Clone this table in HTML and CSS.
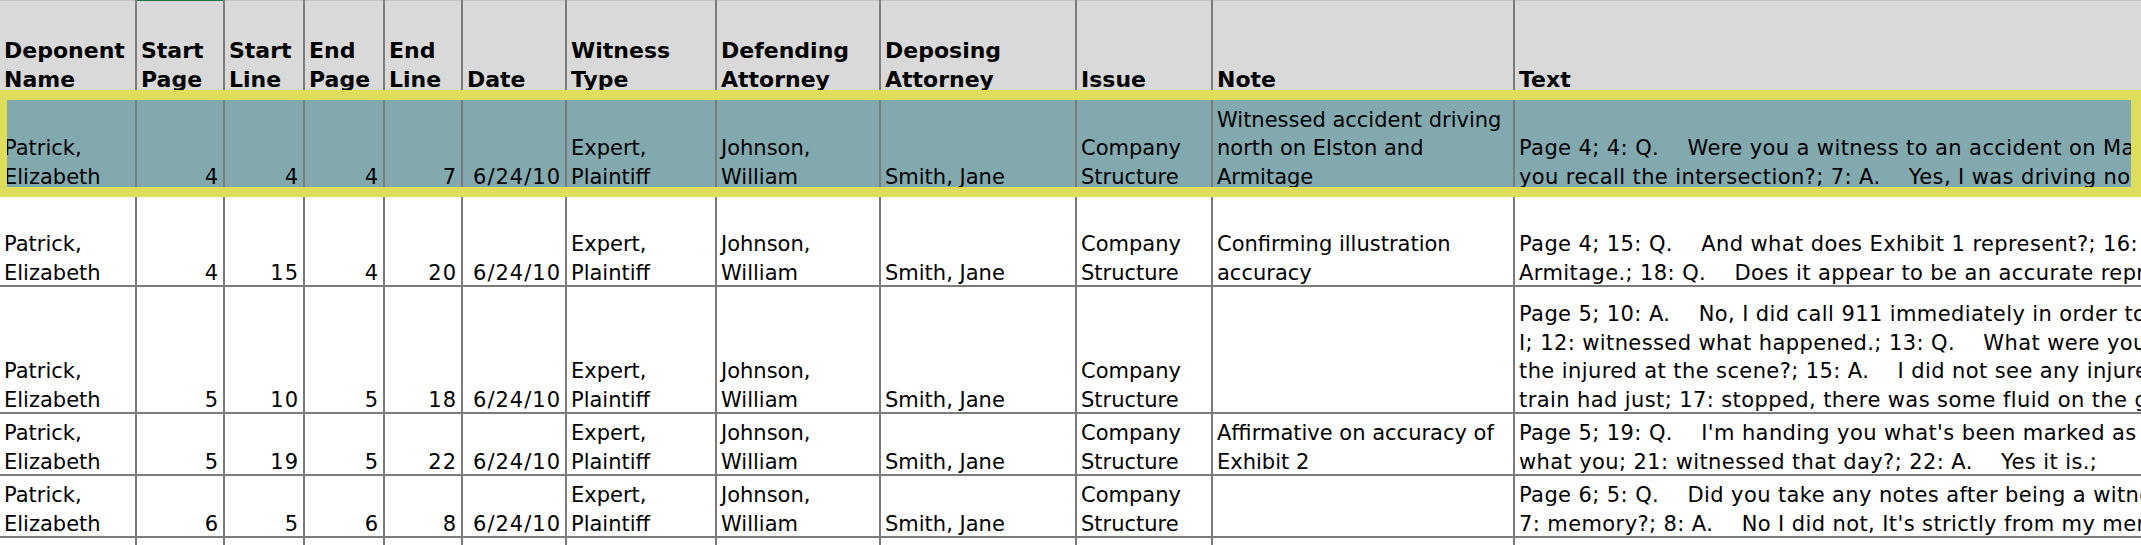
FILE: index.html
```html
<!DOCTYPE html>
<html lang="en">
<head>
<meta charset="utf-8">
<title>Deposition Designations</title>
<link rel="stylesheet" href="styles.css">
</head>
<body>
<div class="page">
  <div class="sheet">
    <div class="c hd"><span class="t">Deponent<br>Name</span></div>
    <div class="c hd sel"><span class="t">Start<br>Page</span></div>
    <div class="c hd"><span class="t">Start<br>Line</span></div>
    <div class="c hd"><span class="t">End<br>Page</span></div>
    <div class="c hd"><span class="t">End<br>Line</span></div>
    <div class="c hd"><span class="t">Date</span></div>
    <div class="c hd"><span class="t">Witness<br>Type</span></div>
    <div class="c hd"><span class="t">Defending<br>Attorney</span></div>
    <div class="c hd"><span class="t">Deposing<br>Attorney</span></div>
    <div class="c hd"><span class="t">Issue</span></div>
    <div class="c hd"><span class="t">Note</span></div>
    <div class="c hd"><span class="t">Text</span></div>

    <div class="c hl"><span class="t">Patrick,<br>Elizabeth</span></div>
    <div class="c hl n"><span class="t">4</span></div>
    <div class="c hl n"><span class="t">4</span></div>
    <div class="c hl n"><span class="t">4</span></div>
    <div class="c hl n"><span class="t">7</span></div>
    <div class="c hl n"><span class="t">6/24/10</span></div>
    <div class="c hl"><span class="t">Expert,<br>Plaintiff</span></div>
    <div class="c hl"><span class="t">Johnson,<br>William</span></div>
    <div class="c hl"><span class="t">Smith, Jane</span></div>
    <div class="c hl"><span class="t">Company<br>Structure</span></div>
    <div class="c hl"><span class="t">Witnessed accident driving<br>north on Elston and<br>Armitage</span></div>
    <div class="c hl tx"><span class="t">Page 4; 4: Q.    Were you a witness to an accident on March<br>you recall the intersection?; 7: A.    Yes, I was driving north</span></div>

    <div class="c"><span class="t">Patrick,<br>Elizabeth</span></div>
    <div class="c n"><span class="t">4</span></div>
    <div class="c n"><span class="t">15</span></div>
    <div class="c n"><span class="t">4</span></div>
    <div class="c n"><span class="t">20</span></div>
    <div class="c n"><span class="t">6/24/10</span></div>
    <div class="c"><span class="t">Expert,<br>Plaintiff</span></div>
    <div class="c"><span class="t">Johnson,<br>William</span></div>
    <div class="c"><span class="t">Smith, Jane</span></div>
    <div class="c"><span class="t">Company<br>Structure</span></div>
    <div class="c"><span class="t">Confirming illustration<br>accuracy</span></div>
    <div class="c tx"><span class="t">Page 4; 15: Q.    And what does Exhibit 1 represent?; 16: A.<br>Armitage.; 18: Q.    Does it appear to be an accurate representation</span></div>

    <div class="c"><span class="t">Patrick,<br>Elizabeth</span></div>
    <div class="c n"><span class="t">5</span></div>
    <div class="c n"><span class="t">10</span></div>
    <div class="c n"><span class="t">5</span></div>
    <div class="c n"><span class="t">18</span></div>
    <div class="c n"><span class="t">6/24/10</span></div>
    <div class="c"><span class="t">Expert,<br>Plaintiff</span></div>
    <div class="c"><span class="t">Johnson,<br>William</span></div>
    <div class="c"><span class="t">Smith, Jane</span></div>
    <div class="c"><span class="t">Company<br>Structure</span></div>
    <div class="c"><span class="t"></span></div>
    <div class="c tx"><span class="t">Page 5; 10: A.    No, I did call 911 immediately in order to<br>I; 12: witnessed what happened.; 13: Q.    What were your<br>the injured at the scene?; 15: A.    I did not see any injured<br>train had just; 17: stopped, there was some fluid on the ground</span></div>

    <div class="c"><span class="t">Patrick,<br>Elizabeth</span></div>
    <div class="c n"><span class="t">5</span></div>
    <div class="c n"><span class="t">19</span></div>
    <div class="c n"><span class="t">5</span></div>
    <div class="c n"><span class="t">22</span></div>
    <div class="c n"><span class="t">6/24/10</span></div>
    <div class="c"><span class="t">Expert,<br>Plaintiff</span></div>
    <div class="c"><span class="t">Johnson,<br>William</span></div>
    <div class="c"><span class="t">Smith, Jane</span></div>
    <div class="c"><span class="t">Company<br>Structure</span></div>
    <div class="c"><span class="t">Affirmative on accuracy of<br>Exhibit 2</span></div>
    <div class="c tx"><span class="t">Page 5; 19: Q.    I'm handing you what's been marked as Exhibit<br>what you; 21: witnessed that day?; 22: A.    Yes it is.;</span></div>

    <div class="c"><span class="t">Patrick,<br>Elizabeth</span></div>
    <div class="c n"><span class="t">6</span></div>
    <div class="c n"><span class="t">5</span></div>
    <div class="c n"><span class="t">6</span></div>
    <div class="c n"><span class="t">8</span></div>
    <div class="c n"><span class="t">6/24/10</span></div>
    <div class="c"><span class="t">Expert,<br>Plaintiff</span></div>
    <div class="c"><span class="t">Johnson,<br>William</span></div>
    <div class="c"><span class="t">Smith, Jane</span></div>
    <div class="c"><span class="t">Company<br>Structure</span></div>
    <div class="c"><span class="t"></span></div>
    <div class="c tx"><span class="t">Page 6; 5: Q.    Did you take any notes after being a witness<br>7: memory?; 8: A.    No I did not, It's strictly from my memory</span></div>

    <div class="c"></div><div class="c"></div><div class="c"></div><div class="c"></div>
    <div class="c"></div><div class="c"></div><div class="c"></div><div class="c"></div>
    <div class="c"></div><div class="c"></div><div class="c"></div><div class="c"></div>
  </div>
  <div class="selection"></div>
</div>
</body>
</html>
```

FILE: styles.css
```css
html, body {
  margin: 0;
  padding: 0;
  background: #ffffff;
  overflow: hidden;
}

.page {
  position: relative;
  width: 2141px;
  height: 545px;
  overflow: hidden;
  font-family: "DejaVu Sans", "Verdana", sans-serif;
  font-size: 21px;
  color: #000000;
}

.sheet {
  display: grid;
  grid-template-columns: 135px 86px 78px 78px 76px 102px 148px 162px 194px 134px 300px 900px;
  grid-template-rows: 92px 95px 94px 125px 60px 60px 60px;
  gap: 2px;
  background: #7b7b7b;
  width: max-content;
}

.c {
  background: #ffffff;
  display: flex;
  flex-direction: column;
  justify-content: flex-end;
  align-items: flex-start;
  padding: 0 4px 0 4px;
  overflow: hidden;
  min-width: 0;
}

.t {
  display: block;
  white-space: pre;
  line-height: 28.5px;
  margin-bottom: -2px;
}

.n {
  align-items: flex-end;
  padding-right: 4px;
  letter-spacing: 1px;
}

.tx {
  letter-spacing: 0.4px;
}

.hd {
  background: #d9d9d9;
  font-weight: bold;
  font-size: 22px;
  border-top: 1px solid #c4c4c4;
}

.hd.sel {
  border-top-color: #217346;
}

.hl {
  background: #82a9ae;
}

.selection {
  position: absolute;
  left: -3px;
  top: 90px;
  width: 2144px;
  height: 107px;
  box-sizing: border-box;
  border: 10px solid #dede5c;
  pointer-events: none;
}
```
